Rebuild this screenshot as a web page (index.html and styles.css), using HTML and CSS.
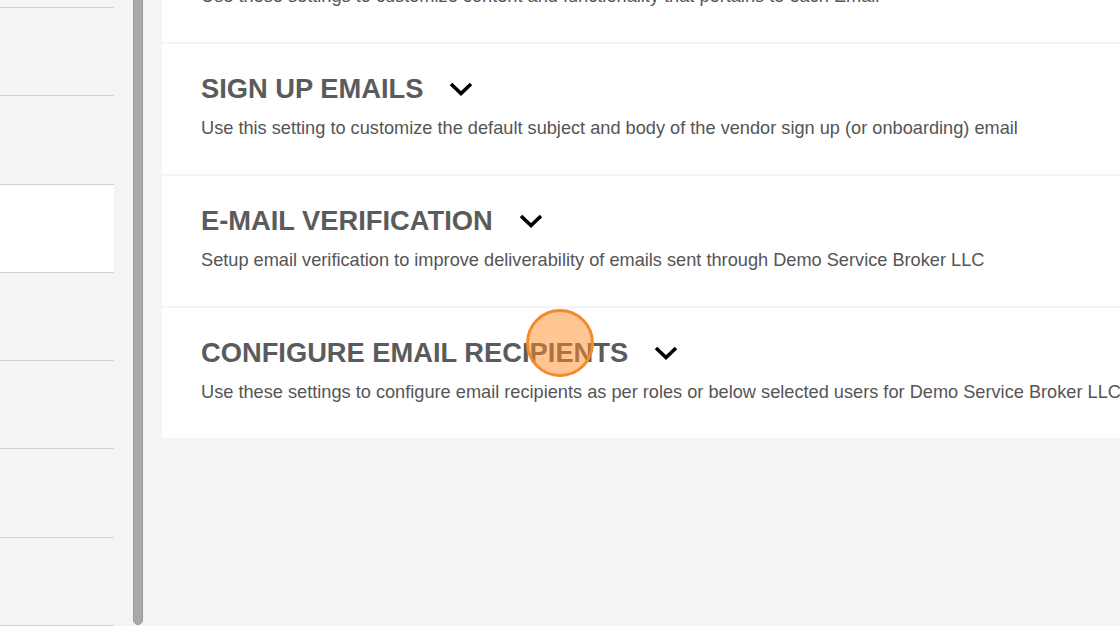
FILE: index.html
```html
<!DOCTYPE html>
<html lang="en">
<head>
<meta charset="utf-8">
<title>Email Settings</title>
<link rel="stylesheet" href="styles.css">
</head>
<body>
<div class="layout">
  <nav class="sidebar">
    <div class="side-item"></div>
    <div class="side-item"></div>
    <div class="side-item"></div>
    <div class="side-item active"></div>
    <div class="side-item"></div>
    <div class="side-item"></div>
    <div class="side-item"></div>
    <div class="side-item"></div>
  </nav>
  <div class="gutter"><div class="thumb"></div></div>
  <main class="content">
    <section class="card">
      <div class="card-head">
        <h2 class="card-title">EMAILS</h2>
        <svg class="chev" viewBox="0 0 24 14" aria-hidden="true"><path d="M2 2 L12 11.5 L22 2"/></svg>
      </div>
      <p class="card-desc">Use these settings to customize content and functionality that pertains to each Email</p>
    </section>
    <section class="card">
      <div class="card-head">
        <h2 class="card-title">SIGN UP EMAILS</h2>
        <svg class="chev" viewBox="0 0 24 14" aria-hidden="true"><path d="M2 2 L12 11.5 L22 2"/></svg>
      </div>
      <p class="card-desc">Use this setting to customize the default subject and body of the vendor sign up (or onboarding) email</p>
    </section>
    <section class="card">
      <div class="card-head">
        <h2 class="card-title">E-MAIL VERIFICATION</h2>
        <svg class="chev" viewBox="0 0 24 14" aria-hidden="true"><path d="M2 2 L12 11.5 L22 2"/></svg>
      </div>
      <p class="card-desc">Setup email verification to improve deliverability of emails sent through Demo Service Broker LLC</p>
    </section>
    <section class="card">
      <div class="card-head">
        <h2 class="card-title">CONFIGURE EMAIL RECIPIENTS</h2>
        <svg class="chev" viewBox="0 0 24 14" aria-hidden="true"><path d="M2 2 L12 11.5 L22 2"/></svg>
      </div>
      <p class="card-desc">Use these settings to configure email recipients as per roles or below selected users for Demo Service Broker LLC</p>
    </section>
  </main>
</div>
<div class="click-marker"></div>
</body>
</html>
```
FILE: styles.css
```css
html, body {
  margin: 0;
  padding: 0;
  width: 1120px;
  height: 626px;
  overflow: hidden;
  background: #f4f4f4;
  font-family: "Liberation Sans", Arial, sans-serif;
}

.layout {
  display: flex;
  align-items: flex-start;
  height: 626px;
}

.sidebar {
  flex: 0 0 114px;
  display: flex;
  flex-direction: column;
  margin-top: -80.25px;
}

.side-item {
  height: 87.25px;
  border-bottom: 1px solid #d2d2d2;
  background: #f4f4f4;
}

.side-item.active {
  background: #ffffff;
}

.gutter {
  flex: 0 0 48px;
  display: flex;
  padding-left: 19px;
  box-sizing: border-box;
}

.thumb {
  width: 10px;
  height: 626px;
  margin-top: -1px;
  box-sizing: border-box;
  background: #a9a9a9;
  border: 1px solid #9a9a9f;
  border-radius: 0 0 5px 5px;
}

.content {
  flex: 0 0 1100px;
  display: flex;
  flex-direction: column;
  gap: 2px;
  margin-top: -88px;
}

.card {
  height: 130px;
  box-sizing: border-box;
  background: #ffffff;
  padding: 29px 0 0 39px;
}

.card-head {
  display: flex;
  align-items: center;
  gap: 26px;
  height: 32px;
}

.card-title {
  margin: 0;
  font-size: 27.3px;
  line-height: 32px;
  font-weight: 700;
  color: #5b5b5b;
  white-space: nowrap;
}

.chev {
  width: 24px;
  height: 14px;
  margin-top: -1px;
  fill: none;
  stroke: #000000;
  stroke-width: 3.6;
  stroke-linecap: butt;
  stroke-linejoin: miter;
}

.card-desc {
  margin: 12px 0 0 0;
  font-size: 18.2px;
  line-height: 22px;
  color: #555555;
  white-space: nowrap;
}

.click-marker {
  position: absolute;
  left: 526px;
  top: 309px;
  width: 68px;
  height: 68px;
  box-sizing: border-box;
  border-radius: 50%;
  border: 3px solid #f28b2c;
  background: rgba(255, 140, 40, 0.5);
}
```
